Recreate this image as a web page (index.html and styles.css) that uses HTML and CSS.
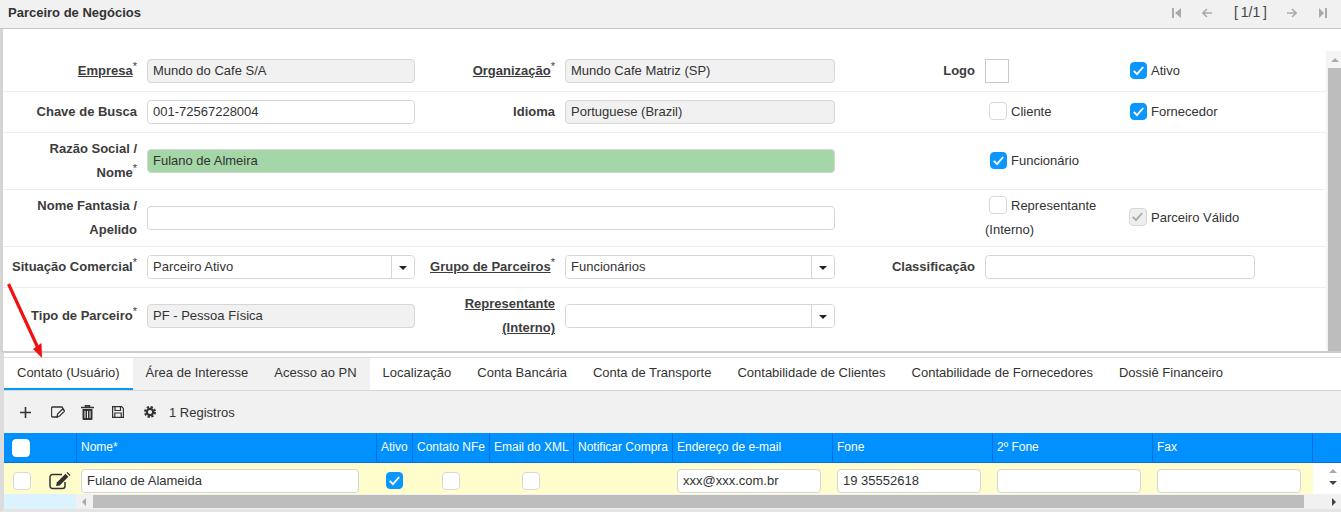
FILE: index.html
```html
<!DOCTYPE html>
<html lang="en">
<head>
    <meta charset="UTF-8">
    <meta name="viewport" content="width=device-width, initial-scale=1.0">
    <title>Parceiro de Negócios</title>
    <link rel="stylesheet" href="styles.css">
</head>
<body>
    <svg class="defs" width="0" height="0">
        <symbol id="check" viewBox="0 0 17 17">
            <path d="M3.8 8.8 L7 12.2 L13.2 5" fill="none" stroke="currentColor" stroke-width="1.9"/>
        </symbol>
    </svg>

    <div class="app">
        <header class="title-bar">
            <span class="title">Parceiro de Negócios</span>
            <div class="pager">
                <svg class="pg-first" width="9" height="10" viewBox="0 0 9 10"><path d="M0 0h2v10H0zM9 0v10L3 5z" fill="#aaa"/></svg>
                <svg class="pg-prev" width="10" height="10" viewBox="0 0 10 10"><path d="M5 1 1 5l4 4M1 5h9" fill="none" stroke="#aaa" stroke-width="1.6"/></svg>
                <span class="pg-count">[ 1/1 ]</span>
                <svg class="pg-next" width="10" height="10" viewBox="0 0 10 10"><path d="m5 1 4 4-4 4M9 5H0" fill="none" stroke="#aaa" stroke-width="1.6"/></svg>
                <svg class="pg-last" width="8" height="10" viewBox="0 0 8 10"><path d="M0 0v10l5-5zM6 0h2v10H6z" fill="#aaa"/></svg>
            </div>
        </header>

        <div class="form-panel">
            <form class="form">
                <div class="row row-first">
                    <label class="lbl"><u>Empresa</u><sup>*</sup></label>
                    <input class="inp off" type="text" value="Mundo do Cafe S/A">
                    <label class="lbl"><u>Organização</u><sup>*</sup></label>
                    <input class="inp off" type="text" value="Mundo Cafe Matriz (SP)">
                    <label class="lbl">Logo</label>
                    <span class="logo-box"></span>
                    <label class="chk"><span class="box on"><svg width="17" height="17"><use href="#check"/></svg></span>Ativo</label>
                </div>
                <div class="row">
                    <label class="lbl">Chave de Busca</label>
                    <input class="inp" type="text" value="001-72567228004">
                    <label class="lbl">Idioma</label>
                    <input class="inp off" type="text" value="Portuguese (Brazil)">
                    <span></span>
                    <label class="chk"><span class="box"></span>Cliente</label>
                    <label class="chk"><span class="box on"><svg width="17" height="17"><use href="#check"/></svg></span>Fornecedor</label>
                </div>
                <div class="row row-tall">
                    <label class="lbl">Razão Social /<br>Nome<sup>*</sup></label>
                    <input class="inp inp-wide inp-green" type="text" value="Fulano de Almeira">
                    <span></span>
                    <label class="chk"><span class="box on"><svg width="17" height="17"><use href="#check"/></svg></span>Funcionário</label>
                </div>
                <div class="row row-tall">
                    <label class="lbl">Nome Fantasia /<br>Apelido</label>
                    <input class="inp inp-wide" type="text" value="">
                    <span></span>
                    <label class="chk chk-wrap"><span class="box"></span>Representante (Interno)</label>
                    <label class="chk"><span class="box off"><svg width="17" height="17"><use href="#check"/></svg></span>Parceiro Válido</label>
                </div>
                <div class="row">
                    <label class="lbl">Situação Comercial<sup>*</sup></label>
                    <div class="combo"><input type="text" value="Parceiro Ativo"><button type="button"><i class="caret"></i></button></div>
                    <label class="lbl"><u>Grupo de Parceiros</u><sup>*</sup></label>
                    <div class="combo"><input type="text" value="Funcionários"><button type="button"><i class="caret"></i></button></div>
                    <label class="lbl">Classificação</label>
                    <input class="inp inp-class" type="text" value="">
                </div>
                <div class="row row-last">
                    <label class="lbl">Tipo de Parceiro<sup>*</sup></label>
                    <input class="inp off" type="text" value="PF - Pessoa Física">
                    <label class="lbl lbl-two"><u>Representante<br>(Interno)</u></label>
                    <div class="combo"><input type="text" value=""><button type="button"><i class="caret"></i></button></div>
                </div>
            </form>
            <div class="vscroll">
                <div class="vscroll-up"><i class="tri-up"></i></div>
                <div class="vscroll-thumb"></div>
            </div>
        </div>

        <section class="detail">
            <nav class="tabs">
                <a class="tab active">Contato (Usuário)</a>
                <a class="tab shade">Área de Interesse</a>
                <a class="tab shade">Acesso ao PN</a>
                <a class="tab">Localização</a>
                <a class="tab">Conta Bancária</a>
                <a class="tab">Conta de Transporte</a>
                <a class="tab">Contabilidade de Clientes</a>
                <a class="tab">Contabilidade de Fornecedores</a>
                <a class="tab">Dossiê Financeiro</a>
            </nav>

            <div class="toolbar">
                <svg class="ico ico-add" width="11" height="11" viewBox="0 0 11 11"><path d="M5.5 0v11M0 5.5h11" stroke="#333" stroke-width="1.6"/></svg>
                <svg class="ico ico-edit" width="14" height="12" viewBox="0 0 14 12"><path d="M7 11H1.500a1 1 0 0 1-1-1V2a1 1 0 0 1 1-1H11l2 3" fill="none" stroke="#333" stroke-width="1.300"/><path d="M6 10.800 6.600 8l5-5 2 2-5 5z" fill="#fff" stroke="#333" stroke-width="1.300"/></svg>
                <svg class="ico ico-trash" width="13" height="15" viewBox="0 0 13 15"><path d="M4.500 2V.800h4V2M0 2.500h13" fill="none" stroke="#333" stroke-width="1.400"/><path d="M1.500 4h10v10a1 1 0 0 1-1 1h-8a1 1 0 0 1-1-1z" fill="#333"/><path d="M4 6v7M6.500 6v7M9 6v7" stroke="#f1f1f1" stroke-width="1"/></svg>
                <svg class="ico ico-save" width="12" height="12" viewBox="0 0 12 12"><path d="M.600.600h9l1.800 1.800v9H.600z" fill="none" stroke="#333" stroke-width="1.200"/><path d="M3 1v3.500h5.500V1M2.800 11V7h6.400v4" fill="none" stroke="#333" stroke-width="1.200"/></svg>
                <svg class="ico ico-gear" width="12" height="12" viewBox="0 0 12 12"><circle cx="6" cy="6" r="3.200" fill="none" stroke="#333" stroke-width="2.200"/><circle cx="6" cy="6" r="5" fill="none" stroke="#333" stroke-width="2" stroke-dasharray="2.300 1.630"/></svg>
                <span class="count">1 Registros</span>
            </div>

            <div class="grid grid-head">
                <div class="cell"><span class="box box-head"></span></div>
                <div class="cell">Nome*</div>
                <div class="cell">Ativo</div>
                <div class="cell">Contato NFe</div>
                <div class="cell">Email do XML</div>
                <div class="cell">Notificar Compra</div>
                <div class="cell">Endereço de e-mail</div>
                <div class="cell">Fone</div>
                <div class="cell">2º Fone</div>
                <div class="cell">Fax</div>
                <div class="cell cell-end"></div>
            </div>
            <div class="grid grid-row">
                <div class="cell cell-tools">
                    <span class="box"></span>
                    <svg class="row-edit" width="22" height="18" viewBox="0 0 22 18"><path d="M13 2.500H3.500a2.500 2.500 0 0 0-2.500 2.500v9a2.500 2.500 0 0 0 2.500 2.500h10a2.500 2.500 0 0 0 2.500-2.500V10" fill="none" stroke="#333" stroke-width="1.500"/><path d="m7 14 .8-3.500L16.500 1.800l2.900 2.900-8.700 8.700z" fill="#333"/><path d="m17.500.8 1-.8 3 3-.8 1z" fill="#333"/></svg>
                </div>
                <div class="cell cell-name"><input class="inp" type="text" value="Fulano de Alameida"></div>
                <div class="cell cell-mid"><span class="box on"><svg width="17" height="17"><use href="#check"/></svg></span></div>
                <div class="cell cell-mid"><span class="box"></span></div>
                <div class="cell cell-mid cell-mail"><span class="box"></span></div>
                <div class="cell"></div>
                <div class="cell"><input class="inp" type="text" value="xxx@xxx.com.br"></div>
                <div class="cell"><input class="inp" type="text" value="19 35552618"></div>
                <div class="cell"><input class="inp" type="text" value=""></div>
                <div class="cell"><input class="inp" type="text" value=""></div>
                <div class="cell cell-end"><i class="tri-up"></i><i class="tri-down"></i></div>
            </div>
            <div class="hscroll">
                <div class="hscroll-blue"></div>
                <div class="hscroll-track">
                    <i class="tri-left"></i>
                    <div class="hscroll-thumb"></div>
                    <i class="tri-right"></i>
                </div>
            </div>
        </section>

        <svg class="red-arrow" width="50" height="80" viewBox="0 0 50 80">
            <path d="M8.500 4 38 68" stroke="#f01010" stroke-width="3.200"/>
            <path d="M33 69 41.500 63 42 78z" fill="#f01010"/>
        </svg>
    </div>
</body>
</html>
```

FILE: styles.css
```css
* {
    margin: 0;
    padding: 0;
    box-sizing: border-box;
}
body {
    background-color: #fff;
    font-family: "Liberation Sans", Arial, sans-serif;
    font-size: 13px;
    color: #333;
    overflow: hidden;
}
.defs {
    position: absolute;
}
.app {
    position: relative;
    display: flex;
    flex-direction: column;
    width: 1341px;
    height: 512px;
    overflow: hidden;
}

/* title bar */
.title-bar {
    display: flex;
    align-items: center;
    justify-content: space-between;
    height: 29px;
    padding: 0 14px 3px 8px;
    background-color: #f1f1f1;
    border-bottom: 1px solid #c4c4c4;
}
.title {
    font-weight: bold;
}
.pager {
    display: flex;
    align-items: center;
}
.pg-prev { margin-left: 21px; }
.pg-count { margin-left: 22px; margin-top: -2px; color: #444; font-size: 14px; word-spacing: -1px; }
.pg-next { margin-left: 20px; }
.pg-last { margin-left: 22px; }

/* form */
.form-panel {
    display: flex;
    height: 322px;
    border-left: 3px solid #d4d4d4;
}
.form {
    flex: 1;
}
.row {
    display: grid;
    grid-template-columns: 144px 268px 150px 270px 150px 140px 1fr;
    align-items: center;
    min-height: 41px;
    border-bottom: 1px solid #eee;
}
.row-first {
    padding-top: 22px;
    min-height: 63px;
}
.row-tall {
    min-height: 57px;
}
.row-last {
    align-items: start;
    min-height: 63px;
    padding-top: 16px;
    border-bottom: none;
}
.lbl {
    padding-right: 10px;
    font-weight: bold;
    line-height: 24px;
    text-align: right;
    color: #3c3c3c;
}
.lbl sup {
    font-size: 11px;
    font-weight: normal;
    line-height: 0;
}
.lbl-two {
    margin-top: -12px;
}
.inp {
    width: 100%;
    height: 24px;
    padding: 0 5px 2px;
    border: 1px solid #d6d6d6;
    border-radius: 4px;
    background-color: #fff;
    font: inherit;
    color: #333;
    outline: none;
}
.off {
    background-color: #f1f1f1;
}
.inp-green {
    background-color: #a5d6a7;
}
.inp-wide {
    grid-column: span 3;
}
.inp-class {
    grid-column: span 2;
    width: 270px;
}
.combo {
    display: flex;
    height: 24px;
    border: 1px solid #d6d6d6;
    border-radius: 4px;
    overflow: hidden;
}
.combo input {
    flex: 1;
    min-width: 0;
    padding: 0 5px 2px;
    border: none;
    font: inherit;
    color: #333;
    outline: none;
}
.combo button {
    width: 23px;
    background-color: #fff;
    border: none;
    border-left: 1px solid #d6d6d6;
}
.caret {
    display: inline-block;
    vertical-align: middle;
    border-top: 4px solid #222;
    border-left: 4px solid transparent;
    border-right: 4px solid transparent;
}
.logo-box {
    width: 24px;
    height: 24px;
    border: 1px solid #c8c8c8;
}
.chk {
    padding-left: 4px;
    line-height: 24px;
}
.chk-wrap {
    padding-left: 0;
}
.chk-wrap .box {
    margin-left: 4px;
}
.box {
    display: inline-block;
    width: 18px;
    height: 18px;
    margin-right: 4px;
    vertical-align: -4px;
    background-color: #fff;
    border: 1px solid #d8d8d8;
    border-radius: 4px;
    overflow: hidden;
}
.box svg {
    display: block;
    margin: -1px 0 0 -1px;
}
.box.on {
    width: 17px;
    height: 17px;
    margin-left: 1px;
    background-color: #0a96ff;
    border-color: #0a96ff;
    color: #fff;
}
.box.off {
    background-color: #eee;
    color: #aaa;
}
.vscroll {
    width: 15px;
    margin-top: 22px;
    padding-left: 2px;
    background-color: #f4f4f4;
}
.vscroll-up {
    display: flex;
    align-items: center;
    justify-content: center;
    height: 17px;
}
.vscroll-thumb {
    height: 283px;
    background-color: #bdbdbd;
}
.tri-up {
    display: block;
    border-bottom: 4px solid #aaa;
    border-left: 4px solid transparent;
    border-right: 4px solid transparent;
}
.tri-down {
    display: block;
    border-top: 4px solid #444;
    border-left: 4px solid transparent;
    border-right: 4px solid transparent;
}
.tri-left {
    display: block;
    margin: 0 7px 0 6px;
    border-right: 4px solid #aaa;
    border-top: 4px solid transparent;
    border-bottom: 4px solid transparent;
}
.tri-right {
    display: block;
    margin: 0 5px 0 auto;
    border-left: 4px solid #444;
    border-top: 4px solid transparent;
    border-bottom: 4px solid transparent;
}

/* detail panel */
.detail {
    flex: 1;
    display: flex;
    flex-direction: column;
    border-top: 2px solid #ccc;
    border-left: 4px solid #dcdcdc;
    border-bottom: 3px solid #e4e4e4;
    padding-top: 4px;
}
.tabs {
    display: flex;
    height: 34px;
    border-top: 1px solid #ddd;
    border-bottom: 1px solid #d8d8d8;
}
.tab {
    padding: 0 13px;
    line-height: 29px;
    white-space: nowrap;
}
.tab.active {
    border-bottom: 2px solid #0a96ff;
}
.tab.shade {
    background-color: #f1f1f1;
}
.toolbar {
    display: flex;
    align-items: center;
    height: 42px;
    background-color: #f1f1f1;
}
.ico {
    flex: none;
}
.ico-add { margin-left: 16px; }
.ico-edit { margin-left: 20px; }
.ico-trash { margin-left: 16px; }
.ico-save { margin-left: 18px; }
.ico-gear { margin-left: 20px; }
.count { margin-left: 13px; }

/* grid */
.grid {
    display: grid;
    grid-template-columns: 73px 300px 36px 77px 84px 99px 160px 160px 160px 160px 1fr;
}
.grid-head {
    height: 30px;
    background-color: #0091ff;
    border-bottom: 1px solid #0a6de0;
    color: #fff;
    font-size: 12px;
}
.grid-head .cell {
    display: flex;
    align-items: center;
    padding: 0 0 2px 4px;
    border-right: 1px solid #0a6de0;
    white-space: nowrap;
}
.grid-head .cell:first-child {
    padding: 0 0 0 8px;
}
.grid-head .cell-end {
    border-right: none;
}
.box-head {
    border-color: #fff;
}
.grid-row {
    height: 31px;
}
.grid-row .cell {
    display: flex;
    align-items: flex-start;
    padding: 6px 12px 0 4px;
    background-color: #fffdcc;
}
.grid-row .cell-name {
    padding-right: 18px;
}
.grid-row .cell-tools {
    justify-content: space-between;
    padding: 9px 6px 0 9px;
}
.cell-tools .box {
    margin: 0;
}
.row-edit {
    display: block;
}
.grid-row .cell-mid {
    justify-content: center;
    padding: 9px 1px 0 0;
}
.grid-row .cell-mail {
    padding-right: 3px;
}
.cell-mid .box {
    margin: 0;
}
.grid-row .cell-end {
    flex-direction: column;
    align-items: flex-end;
    gap: 8px;
    padding: 6px 4px 0 0;
    background-color: #fff;
}
.hscroll {
    display: flex;
    height: 15px;
}
.hscroll-blue {
    width: 72px;
    background-color: #dcf2ff;
}
.hscroll-track {
    flex: 1;
    display: flex;
    align-items: center;
    background-color: #f1f1f1;
}
.hscroll-thumb {
    width: 1211px;
    height: 13px;
    background-color: #bdbdbd;
}

.red-arrow {
    position: absolute;
    left: 0;
    top: 280px;
}
```
